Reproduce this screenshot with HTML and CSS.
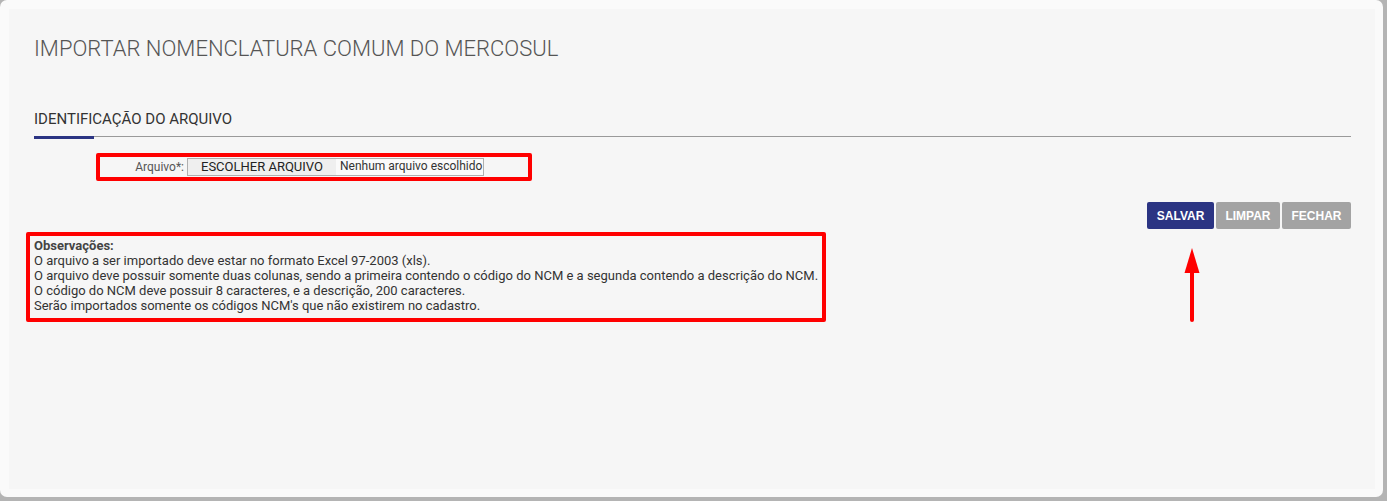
FILE: index.html
```html
<!DOCTYPE html>
<html lang="pt-BR">
<head>
  <meta charset="UTF-8" />
  <meta name="viewport" content="width=device-width, initial-scale=1.0"/>
  <title>Importar NCM</title>
  <link rel="stylesheet" href="styles.css">
</head>
<body>

  <div class="modal">
    <div class="panel">
      <h1 class="page-title">IMPORTAR NOMENCLATURA COMUM DO MERCOSUL</h1>

      <h2 class="section-title">IDENTIFICAÇÃO DO ARQUIVO</h2>
      <div class="rule"><span></span></div>

      <div class="file-row mark">
        <label class="file-label" for="arquivo">Arquivo*:</label>
        <div class="file-input" id="arquivo">
          <span class="file-btn">ESCOLHER ARQUIVO</span>
          <span class="file-name">Nenhum arquivo escolhido</span>
        </div>
      </div>

      <div class="actions">
        <button class="btn btn-primary">SALVAR</button>
        <button class="btn">LIMPAR</button>
        <button class="btn">FECHAR</button>
        <svg class="arrow" width="16" height="75" viewBox="0 0 16 75">
          <path d="M8 0 L15.5 25 L0.5 25 Z" fill="#ff0000"/>
          <line x1="8" y1="22" x2="8" y2="72" stroke="#ff0000" stroke-width="4" stroke-linecap="round"/>
        </svg>
      </div>

      <div class="notes mark">
        <b>Observações:</b><br>
        O arquivo a ser importado deve estar no formato Excel 97-2003 (xls).<br>
        O arquivo deve possuir somente duas colunas, sendo a primeira contendo o código do NCM e a segunda contendo a descrição do NCM.<br>
        O código do NCM deve possuir 8 caracteres, e a descrição, 200 caracteres.<br>
        Serão importados somente os códigos NCM's que não existirem no cadastro.
      </div>
    </div>
  </div>

</body>
</html>
```

FILE: styles.css
```css
html {
  background: #b4b4b4;
}

body {
  margin: 0;
  font-family: Roboto, 'Noto Sans', sans-serif;
  color: #333;
}

.modal {
  width: 1383px;
  height: 497px;
  box-sizing: border-box;
  padding: 9px 8px 8px 9px;
  background: #fafafa;
  border-radius: 7px;
}

.panel {
  height: 100%;
  box-sizing: border-box;
  padding: 27px 24px 0 25px;
  background: #f6f6f6;
}

.page-title {
  margin: 0;
  font-size: 22px;
  line-height: 26px;
  font-weight: 300;
  color: #555;
}

.section-title {
  margin: 48px 0 0;
  font-size: 15px;
  line-height: 18px;
  font-weight: 400;
  color: #333;
  padding-bottom: 8px;
}

.rule {
  height: 1px;
  background: #9a9a9a;
}

.rule span {
  display: block;
  width: 60px;
  height: 3px;
  background: #2b3483;
}

.mark {
  border: 4px solid #ff0000;
  border-radius: 2px;
}

.file-row {
  display: flex;
  align-items: center;
  width: 436px;
  height: 28px;
  box-sizing: border-box;
  margin: 16px 0 0 62px;
}

.file-label {
  width: 84px;
  padding-right: 3px;
  text-align: right;
  font-size: 12px;
  color: #555;
}

.file-input {
  display: flex;
  align-items: center;
  width: 297px;
  height: 18px;
  box-sizing: border-box;
  border: 1px solid #b0b0b0;
  background: #fafafa;
}

.file-btn {
  width: 148px;
  height: 100%;
  box-sizing: border-box;
  padding-bottom: 2px;
  display: flex;
  align-items: center;
  justify-content: center;
  background: #efefef;
  font-size: 13px;
  color: #222;
}

.file-name {
  padding: 0 0 2px 4px;
  font-size: 12px;
  color: #333;
}

.actions {
  position: relative;
  display: flex;
  justify-content: flex-end;
  gap: 2px;
  margin-top: 21px;
}

.btn {
  height: 27px;
  padding: 0 9.5px;
  border: none;
  border-radius: 2px;
  background: #a3a3a3;
  color: #fff;
  font-family: 'Liberation Sans', Arial, sans-serif;
  font-size: 12px;
  font-weight: bold;
}

.btn-primary {
  background: #2b3483;
}

.arrow {
  position: absolute;
  top: 46px;
  right: 151px;
}

.notes {
  display: inline-block;
  margin: 3px 0 0 -8px;
  padding: 2px 4px 5px 4px;
  font-size: 13px;
  line-height: 15px;
  color: #333;
}

.notes b {
  font-weight: 700;
  color: #444;
}
```
